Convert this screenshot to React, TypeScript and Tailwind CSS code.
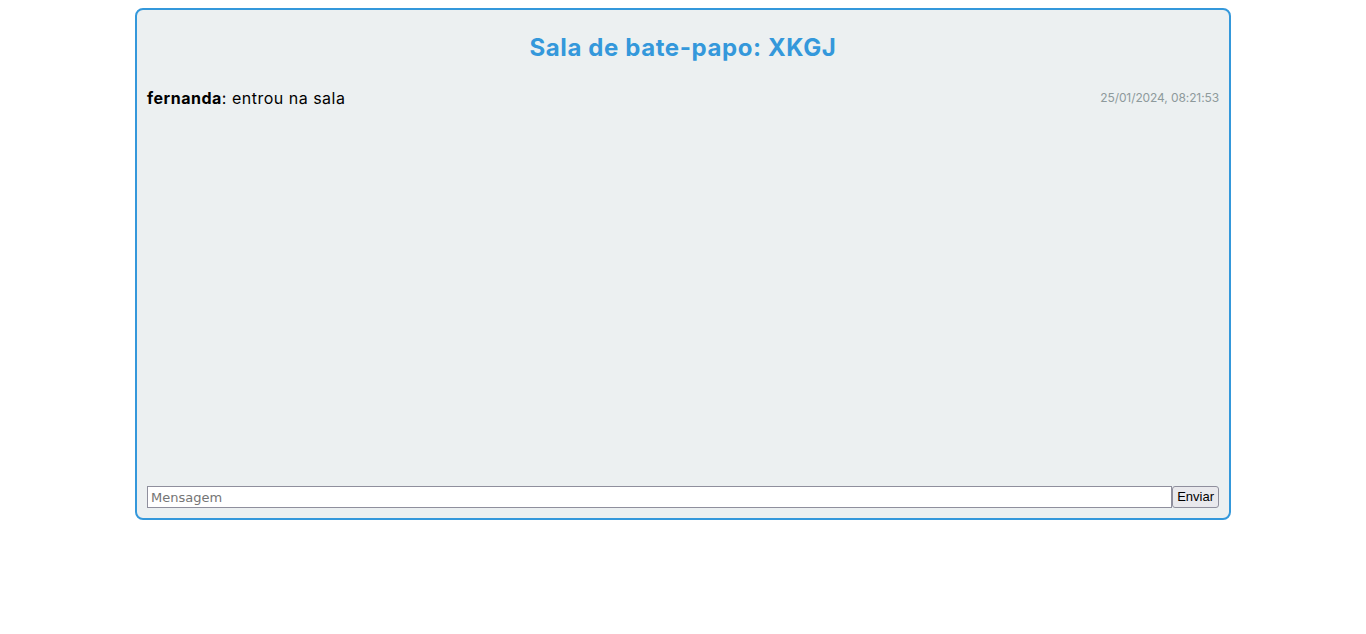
import React from "react";

export default function App() {
  return (
    <div className="w-full bg-white" style={{ fontFamily: "Inter, 'Noto Sans', sans-serif" }}>
      <div className="mx-auto mt-2 flex h-[512px] w-[1096px] flex-col rounded-[8px] border-2 border-[#3498db] bg-[#ecf0f1] px-[10px] pb-[10px]">
        <h2 className="mt-[20px] text-center text-[24px] leading-[36px] font-bold tracking-[0.6px] text-[#3498db]">
          Sala de bate-papo: XKGJ
        </h2>
        <div className="mt-[20px] flex-1">
          <div className="flex items-center justify-between">
            <p className="text-[16px] leading-[24px] tracking-[0.5px] text-black">
              <strong className="font-bold">fernanda</strong>: entrou na sala
            </p>
            <span className="text-[12px] tracking-[-0.1px] text-[#8e9a9c]">25/01/2024, 08:21:53</span>
          </div>
        </div>
        <form className="flex items-stretch" onSubmit={(e) => e.preventDefault()}>
          <input
            type="text"
            placeholder="Mensagem"
            className="h-[22px] flex-1 border border-[#8f8f9d] bg-white px-[3px] text-[13px] placeholder:text-[#757575]"
            style={{ fontFamily: "'DejaVu Sans', sans-serif" }}
          />
          <button
            type="submit"
            className="h-[22px] rounded-[3px] border border-[#8f8f9d] bg-[#e9e9ed] px-[4px] text-[13px] text-black"
            style={{ fontFamily: "'Liberation Sans', sans-serif" }}
          >
            Enviar
          </button>
        </form>
      </div>
    </div>
  );
}
